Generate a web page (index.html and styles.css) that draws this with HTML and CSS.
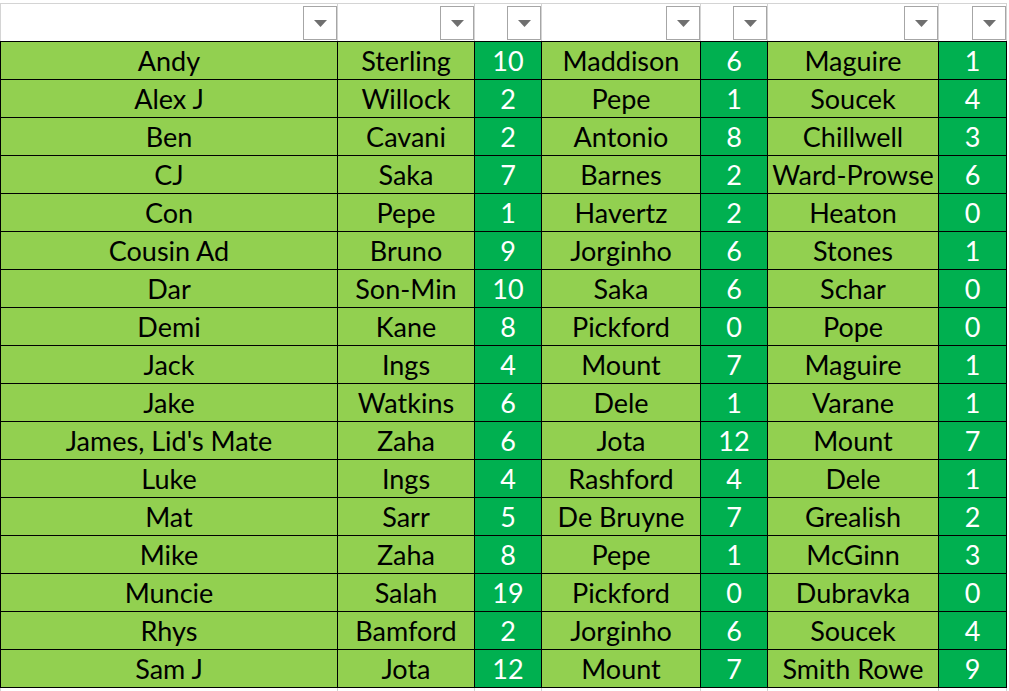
FILE: index.html
```html
<!DOCTYPE html>
<html lang="en">
<head>
<meta charset="utf-8">
<title>Predictions</title>
<link rel="stylesheet" href="styles.css">
</head>
<body>
<div class="sheet">
  <div class="head grid">
    <div class="hcell"><span class="filter"><svg width="13" height="7" viewBox="0 0 13 7"><polygon points="0,0 13,0 6.5,7" /></svg></span></div>
    <div class="hcell"><span class="filter"><svg width="13" height="7" viewBox="0 0 13 7"><polygon points="0,0 13,0 6.5,7" /></svg></span></div>
    <div class="hcell"><span class="filter"><svg width="13" height="7" viewBox="0 0 13 7"><polygon points="0,0 13,0 6.5,7" /></svg></span></div>
    <div class="hcell"><span class="filter"><svg width="13" height="7" viewBox="0 0 13 7"><polygon points="0,0 13,0 6.5,7" /></svg></span></div>
    <div class="hcell"><span class="filter"><svg width="13" height="7" viewBox="0 0 13 7"><polygon points="0,0 13,0 6.5,7" /></svg></span></div>
    <div class="hcell"><span class="filter"><svg width="13" height="7" viewBox="0 0 13 7"><polygon points="0,0 13,0 6.5,7" /></svg></span></div>
    <div class="hcell"><span class="filter"><svg width="13" height="7" viewBox="0 0 13 7"><polygon points="0,0 13,0 6.5,7" /></svg></span></div>
  </div>
  <div class="data grid">
    <div class="c n">Andy</div><div class="c n">Sterling</div><div class="c s">10</div><div class="c n">Maddison</div><div class="c s">6</div><div class="c n">Maguire</div><div class="c s">1</div>
    <div class="c n">Alex J</div><div class="c n">Willock</div><div class="c s">2</div><div class="c n">Pepe</div><div class="c s">1</div><div class="c n">Soucek</div><div class="c s">4</div>
    <div class="c n">Ben</div><div class="c n">Cavani</div><div class="c s">2</div><div class="c n">Antonio</div><div class="c s">8</div><div class="c n">Chillwell</div><div class="c s">3</div>
    <div class="c n">CJ</div><div class="c n">Saka</div><div class="c s">7</div><div class="c n">Barnes</div><div class="c s">2</div><div class="c n">Ward-Prowse</div><div class="c s">6</div>
    <div class="c n">Con</div><div class="c n">Pepe</div><div class="c s">1</div><div class="c n">Havertz</div><div class="c s">2</div><div class="c n">Heaton</div><div class="c s">0</div>
    <div class="c n">Cousin Ad</div><div class="c n">Bruno</div><div class="c s">9</div><div class="c n">Jorginho</div><div class="c s">6</div><div class="c n">Stones</div><div class="c s">1</div>
    <div class="c n">Dar</div><div class="c n">Son-Min</div><div class="c s">10</div><div class="c n">Saka</div><div class="c s">6</div><div class="c n">Schar</div><div class="c s">0</div>
    <div class="c n">Demi</div><div class="c n">Kane</div><div class="c s">8</div><div class="c n">Pickford</div><div class="c s">0</div><div class="c n">Pope</div><div class="c s">0</div>
    <div class="c n">Jack</div><div class="c n">Ings</div><div class="c s">4</div><div class="c n">Mount</div><div class="c s">7</div><div class="c n">Maguire</div><div class="c s">1</div>
    <div class="c n">Jake</div><div class="c n">Watkins</div><div class="c s">6</div><div class="c n">Dele</div><div class="c s">1</div><div class="c n">Varane</div><div class="c s">1</div>
    <div class="c n">James, Lid's Mate</div><div class="c n">Zaha</div><div class="c s">6</div><div class="c n">Jota</div><div class="c s">12</div><div class="c n">Mount</div><div class="c s">7</div>
    <div class="c n">Luke</div><div class="c n">Ings</div><div class="c s">4</div><div class="c n">Rashford</div><div class="c s">4</div><div class="c n">Dele</div><div class="c s">1</div>
    <div class="c n">Mat</div><div class="c n">Sarr</div><div class="c s">5</div><div class="c n">De Bruyne</div><div class="c s">7</div><div class="c n">Grealish</div><div class="c s">2</div>
    <div class="c n">Mike</div><div class="c n">Zaha</div><div class="c s">8</div><div class="c n">Pepe</div><div class="c s">1</div><div class="c n">McGinn</div><div class="c s">3</div>
    <div class="c n">Muncie</div><div class="c n">Salah</div><div class="c s">19</div><div class="c n">Pickford</div><div class="c s">0</div><div class="c n">Dubravka</div><div class="c s">0</div>
    <div class="c n">Rhys</div><div class="c n">Bamford</div><div class="c s">2</div><div class="c n">Jorginho</div><div class="c s">6</div><div class="c n">Soucek</div><div class="c s">4</div>
    <div class="c n">Sam J</div><div class="c n">Jota</div><div class="c s">12</div><div class="c n">Mount</div><div class="c s">7</div><div class="c n">Smith Rowe</div><div class="c s">9</div>
  </div>
  <div class="foot grid">
    <div class="fcell"></div><div class="fcell"></div><div class="fcell"></div><div class="fcell"></div><div class="fcell"></div><div class="fcell"></div><div class="fcell"></div>
  </div>
</div>
</body>
</html>
```

FILE: styles.css
```css
html, body {
  margin: 0;
  padding: 0;
  background: #ffffff;
}

.sheet {
  padding-top: 3px;
  width: 1009px;
  font-family: "Lato", "Liberation Sans", sans-serif;
}

.grid {
  display: grid;
  grid-template-columns: 336px 136px 66px 158px 66px 170px 67px;
  column-gap: 1px;
  width: 1007px;
  box-sizing: border-box;
  padding: 0 1px;
}

.head {
  background: #d4d4d4;
  padding-top: 1px;
  grid-auto-rows: 37px;
}

.hcell {
  background: #ffffff;
  display: flex;
  justify-content: flex-end;
  align-items: flex-start;
  padding-top: 2px;
}

.filter {
  width: 34px;
  height: 34px;
  box-sizing: border-box;
  border: 1px solid #a6a6a6;
  background: #ffffff;
  display: flex;
  align-items: flex-start;
  justify-content: center;
  padding-top: 13px;
}

.filter svg {
  display: block;
  fill: #6f6f6f;
}

.data {
  background: #000000;
  row-gap: 1px;
  padding: 1px;
  grid-auto-rows: 37px;
}

.c {
  display: flex;
  justify-content: center;
  font-size: 27px;
  line-height: 37px;
  white-space: nowrap;
  overflow: hidden;
  box-sizing: border-box;
}

.n {
  background: #92d050;
  color: #000000;
}

.s {
  background: #00b050;
  color: #ffffff;
}

.foot {
  background: #d4d4d4;
  grid-auto-rows: 4px;
}

.fcell {
  background: #ffffff;
}
```
